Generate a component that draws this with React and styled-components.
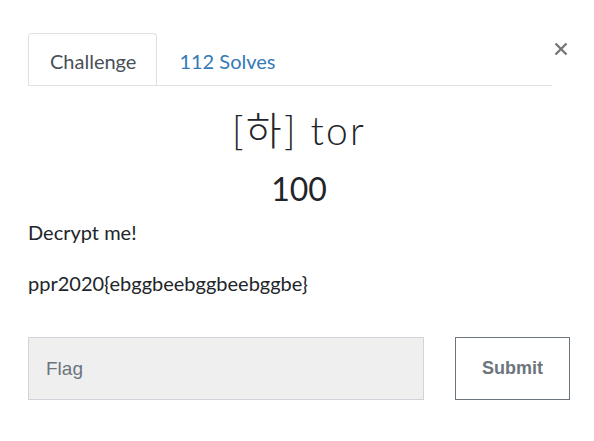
import React from 'react'
import styled, { createGlobalStyle } from 'styled-components'

const GlobalStyle = createGlobalStyle`
  body {
    margin: 0;
    background: #fff;
    font-family: Lato, "Noto Sans CJK KR", sans-serif;
    color: #212529;
  }
`

const Modal = styled.div`
  padding: 33px 24px 0 28px;
`

const Header = styled.div`
  display: flex;
  align-items: flex-start;
`

const Tabs = styled.div`
  flex: 1;
  display: flex;
  border-bottom: 1px solid #dee2e6;
  height: 52px;
`

const Tab = styled.div`
  height: 52px;
  box-sizing: border-box;
  padding: 2px 20px 0 21px;
  display: flex;
  align-items: center;
  font-size: 20px;
  color: ${p => (p.$active ? '#495057' : '#337ab7')};
  background: #fff;
  border: 1px solid ${p => (p.$active ? '#dee2e6' : 'transparent')};
  border-bottom: none;
  border-radius: 4px 4px 0 0;
  margin-bottom: -1px;
`

const Close = styled.button`
  margin: 9px 2px 0 2px;
  width: 14px;
  height: 14px;
  padding: 0;
  border: none;
  background: none;
  display: flex;
`

const Title = styled.h3`
  margin: 21px 0 0;
  text-align: center;
  font-weight: 300;
  font-size: 39px;
  line-height: 1.2;
  color: #212529;
  letter-spacing: 2.2px;
`

const Value = styled.h4`
  margin: 16px 0 0;
  text-align: center;
  font-weight: 400;
  font-size: 32px;
  line-height: 1.2;
  color: #212529;
`

const Description = styled.div`
  margin-top: 9px;
  font-size: 20px;
  color: #212529;

  p {
    margin: 0 0 21px;
    line-height: 30px;
  }
`

const SubmitRow = styled.div`
  display: flex;
  gap: 31px;
  margin-top: 39px;
`

const FlagInput = styled.input`
  flex: 1;
  height: 63px;
  box-sizing: border-box;
  background: #efefef;
  border: 1px solid #ced4da;
  padding: 0 17px;
  font-family: "Liberation Sans", Arial, sans-serif;
  font-size: 19px;
  color: #495057;
  outline: none;

  &::placeholder {
    color: #6c757d;
  }
`

const SubmitButton = styled.button`
  width: 115px;
  height: 63px;
  box-sizing: border-box;
  background: #fff;
  border: 1px solid #6c757d;
  color: #6c757d;
  font-family: "Liberation Sans", Arial, sans-serif;
  font-weight: 700;
  font-size: 18px;
`

export default function App() {
  return (
    <>
      <GlobalStyle />
      <Modal>
        <Header>
          <Tabs>
            <Tab $active>Challenge</Tab>
            <Tab>112 Solves</Tab>
          </Tabs>
          <Close aria-label="Close">
            <svg width="14" height="14" viewBox="0 0 14 14">
              <path d="M1.5 1.5 L12.5 12.5 M12.5 1.5 L1.5 12.5" stroke="#777" strokeWidth="2.4" />
            </svg>
          </Close>
        </Header>
        <Title>[하] tor</Title>
        <Value>100</Value>
        <Description>
          <p>Decrypt me!</p>
          <p>ppr2020{'{'}ebggbeebggbeebggbe{'}'}</p>
        </Description>
        <SubmitRow>
          <FlagInput placeholder="Flag" />
          <SubmitButton>Submit</SubmitButton>
        </SubmitRow>
      </Modal>
    </>
  )
}
